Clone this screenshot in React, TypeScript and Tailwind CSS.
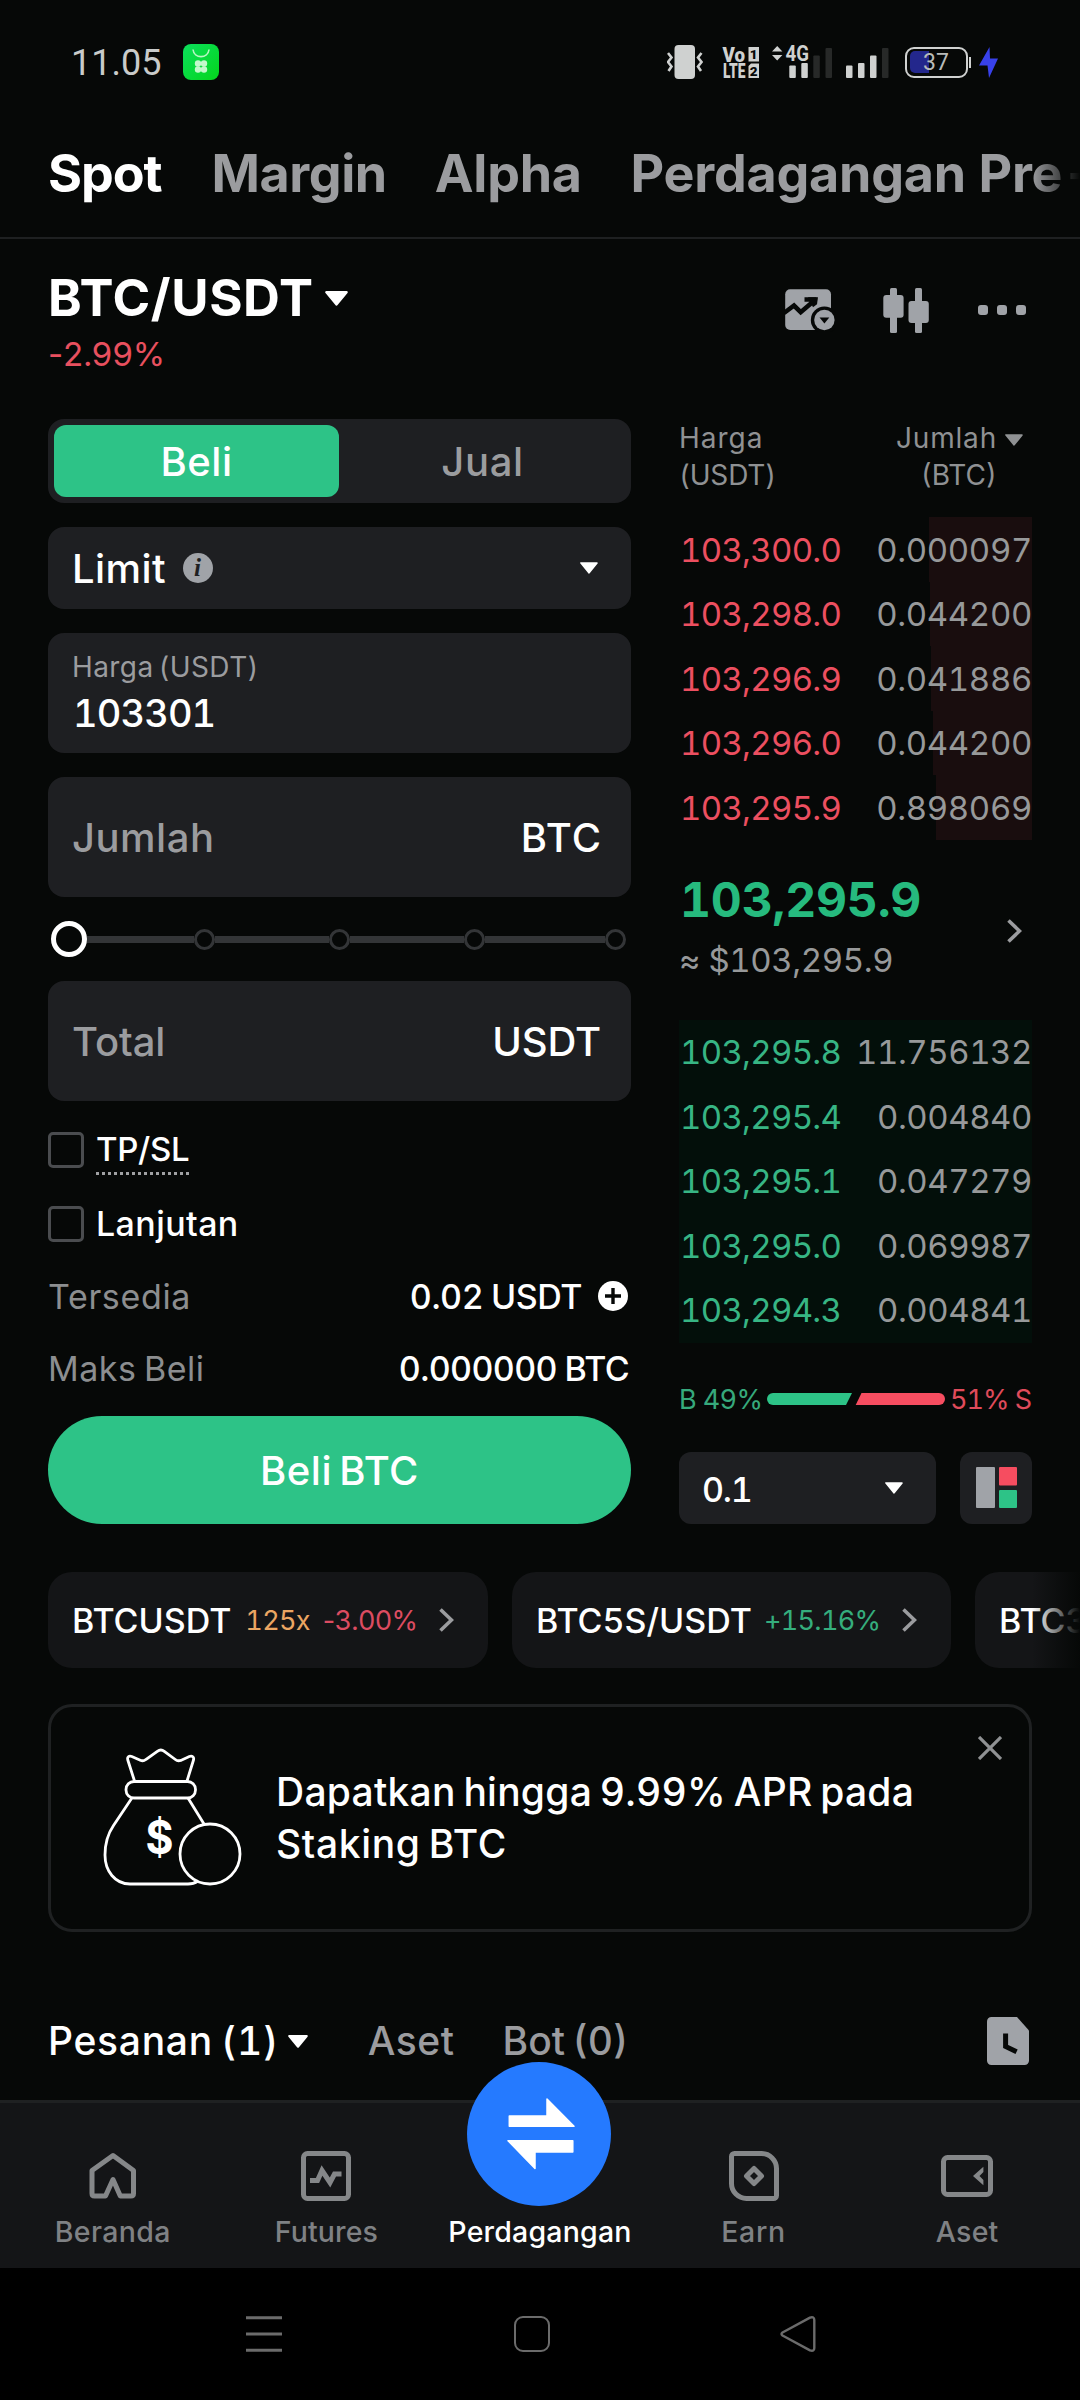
import type { ReactNode } from 'react';

const asks = [
  { price: '103,300.0', amount: '0.000097', depth: 103 },
  { price: '103,298.0', amount: '0.044200', depth: 102.5 },
  { price: '103,296.9', amount: '0.041886', depth: 101 },
  { price: '103,296.0', amount: '0.044200', depth: 99 },
  { price: '103,295.9', amount: '0.898069', depth: 96 },
];

const bids = [
  { price: '103,295.8', amount: '11.756132' },
  { price: '103,295.4', amount: '0.004840' },
  { price: '103,295.1', amount: '0.047279' },
  { price: '103,295.0', amount: '0.069987' },
  { price: '103,294.3', amount: '0.004841' },
];

function Caret({ className = '' }: { className?: string }) {
  return (
    <svg viewBox="0 0 20 13" className={`shrink-0 ${className}`} fill="currentColor" stroke="currentColor" strokeLinejoin="round" strokeWidth="2">
      <path d="M1.2 1h17.6L10 11.8z" />
    </svg>
  );
}

function Chevron({ className = '' }: { className?: string }) {
  return (
    <svg viewBox="0 0 15 24" className={`h-6 w-[15px] shrink-0 ${className}`} fill="none" stroke="#9b9c9f" strokeWidth="3.6">
      <path d="M1.5 1.5 12.5 12 1.5 22.5" />
    </svg>
  );
}

function StatusBar() {
  return (
    <div className="flex h-[124px] shrink-0 items-center pl-[71px]">
      <span className="pt-[2px] font-['Roboto'] text-[36px] leading-none text-[#c9cbca]">11.05</span>
      <svg viewBox="0 0 36 36" className="ml-[22px] size-9">
        <defs>
          <linearGradient id="bag" x1="0" y1="0" x2="1" y2="1">
            <stop offset="0" stopColor="#0be05c" />
            <stop offset="1" stopColor="#04d51c" />
          </linearGradient>
        </defs>
        <rect width="36" height="36" rx="8" fill="url(#bag)" />
        <path d="M10 5.5c1 9.500 15 9.500 16 0" fill="none" stroke="#b8f7c4" strokeWidth="1.6" />
        <g fill="#c4f8cb">
          <circle cx="15" cy="19.500" r="3.200" />
          <circle cx="21" cy="19.500" r="3.200" />
          <circle cx="15" cy="25.500" r="3.200" />
          <circle cx="21" cy="25.500" r="3.200" />
        </g>
      </svg>

      <div className="ml-auto flex items-center pr-[82px]">
        <svg viewBox="0 0 36 36" className="size-9" fill="none" stroke="#cfd1d0" strokeWidth="2.6">
          <rect x="7.500" y="1" width="20.500" height="34" rx="4" fill="#cfd1d0" stroke="none" />
          <path d="m1 9 3.500 4.500L1 18l3.500 4.500L1.500 27M34.500 9 31 13.500l3.500 4.500-3.500 4.500 3 4.500" />
        </svg>
        <svg viewBox="0 0 36 32" className="ml-[20px] h-8 w-9 overflow-visible" fontFamily="Roboto" fontWeight="900" fill="#cfd1d0">
          <text x="-.5" y="15.500" fontSize="20" textLength="22.500" lengthAdjust="spacingAndGlyphs">Vo</text>
          <text x="0" y="31.500" fontSize="19.500" textLength="22.500" lengthAdjust="spacingAndGlyphs">LTE</text>
          <path d="M25.500 1H36v14.500H25.500zM28 17.500h8V32H25.500V20z" />
          <g fill="#060807" fontSize="13.500" textAnchor="middle">
            <text x="30.700" y="13">1</text>
            <text x="30.700" y="29.500">2</text>
          </g>
        </svg>
        <svg viewBox="0 0 61 32" className="ml-[13px] h-8 w-[61px] overflow-visible" fill="#cfd1d0">
          <path d="m0 5.500 5.200-5.500 5.200 5.500zM0 9h10.400L5.200 14.500z" />
          <text x="13.500" y="15" fontFamily="Roboto" fontWeight="700" fontSize="22" textLength="23.500" lengthAdjust="spacingAndGlyphs">4G</text>
          <rect x="17.300" y="19.500" width="6.500" height="12.500" rx="1" />
          <rect x="29.300" y="17" width="6.500" height="15" rx="1" />
          <rect x="41.300" y="9.500" width="6.500" height="22.500" rx="1" fill="#272928" />
          <rect x="53.500" y="2" width="6.500" height="30" rx="1" fill="#272928" />
        </svg>
        <svg viewBox="0 0 44 32" className="ml-[13px] h-8 w-11" fill="#cfd1d0">
          <rect y="19.500" width="6.500" height="12.500" rx="1" />
          <rect x="12" y="17" width="6.500" height="15" rx="1" />
          <rect x="24" y="9.500" width="6.500" height="22.500" rx="1" />
          <rect x="36" y="2" width="6.500" height="30" rx="1" fill="#272928" />
        </svg>
        <div className="ml-[15px] flex h-[31px] w-[63px] items-center rounded-[9px] border-2 border-[#cfd1d0] p-[3px]">
          <div className="h-[22px] w-[19px] shrink-0 rounded-l-[5px] bg-[#23278c]" />
          <span className="-ml-[6px] font-['Roboto'] text-[23px] leading-none text-[#b9bbb9]">37</span>
        </div>
        <div className="ml-px h-[11px] w-[2px] bg-[#cfd1d0]" />
        <svg viewBox="0 0 19 31" className="ml-[8px] h-[31px] w-[19px]" fill="#3841ea">
          <path d="M10.500 0 0 18.500h8.500L10 31l9-19.500h-8z" />
        </svg>
      </div>
    </div>
  );
}

function MarketTabs() {
  return (
    <div className="relative flex h-[115px] shrink-0 items-center gap-12 overflow-hidden border-b-2 border-[#1e2021] pb-[14px] pl-12 text-[52px] leading-[60px] font-bold whitespace-nowrap text-[#9b9c9f]">
      <span className="tracking-[-1.1px] text-white">Spot</span>
      <span className="pl-[2px] tracking-[-0.4px]">Margin</span>
      <span className="tracking-[-0.3px]">Alpha</span>
      <span className="pl-px tracking-[-0.25px] [word-spacing:-1px]">Perdagangan Pre-</span>
      <div className="absolute top-0 right-0 h-[112px] w-12 bg-linear-to-r from-transparent to-[#060807]" />
    </div>
  );
}

function PairHeader() {
  return (
    <div className="flex h-[180px] shrink-0 justify-between pr-[54px] pl-12">
      <div className="pt-[29px]">
        <div className="flex items-center leading-[60px]">
          <span className="text-[51px] font-bold tracking-[0.6px]">BTC/USDT</span>
          <Caret className="ml-[11px] h-[15px] w-[23px]" />
        </div>
        <div className="mt-1 text-[33px] leading-[44px] tracking-[-0.7px] text-[#e8505f]">
          <span className="normal-nums">-</span>2.99%
        </div>
      </div>
      <div className="mt-[47px] flex h-12 items-center">
        <svg viewBox="0 0 52 44" className="h-11 w-[52px]" fill="#a0a3a8">
          <rect x="1.200" y="1.300" width="45.800" height="40.700" rx="5" />
          <path d="M0 25 10 17.500l6.700 6.700L31 12M20.500 11.500h12" fill="none" stroke="#060807" strokeWidth="4.600" />
          <path d="M24 9.200h10l-1 7-4 3z" fill="#060807" />
          <circle cx="40.400" cy="32" r="13.600" fill="#060807" />
          <circle cx="40.400" cy="32" r="10.200" />
          <path d="M35.500 29.500h9.800l-4.900 6z" fill="#060807" />
        </svg>
        <svg viewBox="0 0 46 45" className="ml-[47px] h-[45px] w-[46px]" fill="#a0a3a8">
          <rect x="7" width="7" height="45" rx="1.500" />
          <rect x=".3" y="7" width="20.300" height="22.700" rx="3" />
          <rect x="32" width="7" height="45" rx="1.500" />
          <rect x="25.500" y="13" width="20.300" height="22" rx="3" />
        </svg>
        <div className="ml-[49px] flex gap-[9px]">
          <div className="size-[10px] rounded-[3px] bg-[#a0a3a8]" />
          <div className="size-[10px] rounded-[3px] bg-[#a0a3a8]" />
          <div className="size-[10px] rounded-[3px] bg-[#a0a3a8]" />
        </div>
      </div>
    </div>
  );
}

function Slider() {
  const dot = 'size-[21px] rounded-full border-[3px] border-[#333537]';
  const line = 'h-[7px] bg-[#333537]';
  return (
    <div className="flex h-[84px] items-center pr-1 pl-[3px]">
      <div className="size-9 rounded-full border-[5px] border-white" />
      <div className={`${line} w-[107px]`} />
      <div className={dot} />
      <div className={`${line} w-[114px]`} />
      <div className={dot} />
      <div className={`${line} w-[114px]`} />
      <div className={dot} />
      <div className={`${line} w-[120px]`} />
      <div className={dot} />
    </div>
  );
}

function Box({ children, className }: { children: ReactNode; className: string }) {
  return <div className={`flex rounded-2xl bg-[#1e1f22] ${className}`}>{children}</div>;
}

function OrderForm() {
  return (
    <div className="flex w-[583px] flex-col">
      <Box className="h-[84px] p-[6px] text-[40px] font-medium">
        <div className="flex w-[285px] items-center justify-center rounded-xl bg-[#2dc387] pt-[2px] tracking-[0.5px]">Beli</div>
        <div className="flex flex-1 items-center justify-center pt-[2px] pl-px tracking-[0.6px] text-[#9b9c9f]">Jual</div>
      </Box>

      <Box className="mt-6 h-[82px] items-center pr-[33px] pl-6">
        <span className="pt-[2px] text-[40px] font-medium tracking-[0.4px]">Limit</span>
        <svg viewBox="0 0 30 30" className="ml-[17px] size-[30px]">
          <circle cx="15" cy="15" r="15" fill="#a0a3a8" />
          <text x="14.500" y="22.500" textAnchor="middle" fontFamily="Liberation Serif" fontStyle="italic" fontWeight="700" fontSize="25" fill="#1e1f22">i</text>
        </svg>
        <Caret className="ml-auto h-3 w-[18px]" />
      </Box>

      <Box className="mt-6 h-[120px] flex-col px-6 pt-[15px]">
        <span className="text-[28px] leading-[38px] tracking-[0.4px] text-[#9b9c9f] [word-spacing:-3px]">Harga (USDT)</span>
        <span className="mt-[5px] pl-px text-[38px] leading-[44px] font-medium tracking-[-0.9px]">103301</span>
      </Box>

      <Box className="mt-6 h-[120px] items-center justify-between pt-px pr-[29px] pl-6 text-[40px] font-medium">
        <span className="tracking-[0.5px] text-[#9b9c9f]">Jumlah</span>
        <span className="tracking-[1px]">BTC</span>
      </Box>

      <Slider />

      <Box className="h-[120px] items-center justify-between pt-px pr-[30px] pl-6 text-[40px] font-medium">
        <span className="tracking-[-0.1px] text-[#9b9c9f]">Total</span>
        <span className="tracking-[-0.1px]">USDT</span>
      </Box>

      <div className="mt-[31px] flex h-9 items-center text-[33px] leading-9 font-medium">
        <div className="size-9 rounded-[5px] border-[3px] border-[#4a4c4f]" />
        <div className="relative ml-3">
          <span className="relative -top-px tracking-[-0.3px]">TP/SL</span>
          <div className="absolute inset-x-0 -bottom-[7px] h-[3px] bg-[repeating-linear-gradient(90deg,#a0a1a3_0_3px,transparent_3px_6px)]" />
        </div>
      </div>
      <div className="mt-[38px] flex h-9 items-center text-[34px] leading-9 font-medium">
        <div className="size-9 rounded-[5px] border-[3px] border-[#4a4c4f]" />
        <span className="ml-3 tracking-[0.4px]">Lanjutan</span>
      </div>

      <div className="mt-[34px] flex h-10 items-center text-[34px]">
        <span className="tracking-[0.65px] text-[#8c8e90]">Tersedia</span>
        <span className="ml-auto font-medium tracking-[-0.45px] [word-spacing:-1px]">0.02 USDT</span>
        <svg viewBox="0 0 30 30" className="mr-[3px] ml-[16px] size-[30px]">
          <circle cx="15" cy="15" r="15" fill="#fff" />
          <path d="M15 7v16M7 15h16" stroke="#060807" strokeWidth="3.400" />
        </svg>
      </div>
      <div className="mt-8 flex h-10 items-center justify-between pr-[2px] text-[34px]">
        <span className="tracking-[0.5px] text-[#8c8e90] [word-spacing:-2px]">Maks Beli</span>
        <span className="font-medium tracking-[-0.65px] [word-spacing:-1px]">0.000000 BTC</span>
      </div>

      <div className="mt-[28px] flex h-[108px] items-center justify-center rounded-full bg-[#2dc387] pt-[2px] text-[40px] font-medium tracking-[0.5px] [word-spacing:-4px]">Beli BTC</div>
    </div>
  );
}

function OrderBook() {
  return (
    <div className="flex w-[353px] flex-col">
      <div className="flex h-[74px] justify-between pt-px text-[28px] leading-[37px] text-[#8f9193]">
        <div>
          <div className="tracking-[1px]">Harga</div>
          <div className="tracking-[-0.2px]">(USDT)</div>
        </div>
        <div className="flex pr-[9px] text-right">
          <div>
            <div className="tracking-[0.8px]">Jumlah</div>
            <div>(BTC)</div>
          </div>
          <Caret className="mt-[14px] ml-[8px] h-3 w-[18px]" />
        </div>
      </div>

      <div className="mt-6 flex flex-col text-[33px]">
        {asks.map((row) => (
          <div key={row.price} className="relative flex h-[64.600px] items-center justify-between pt-[2px] pl-px">
            <div className="absolute inset-y-0 right-0 bg-[#190d0e]" style={{ width: row.depth }} />
            <span className="relative tracking-[-0.7px] text-[#ec4f60]">{row.price}</span>
            <span className="relative tracking-[-0.35px] text-[#97999a]">{row.amount}</span>
          </div>
        ))}
      </div>

      <div className="mt-[30px] flex items-center justify-between pr-[10px]">
        <div>
          <div className="pl-px text-[48px] leading-[60px] font-bold tracking-[-0.2px] text-[#26ba7e]">103,295.9</div>
          <div className="mt-[10px] text-[33px] leading-10 tracking-[-0.4px] text-[#97999a]">≈ $103,295.9</div>
        </div>
        <Chevron className="mt-[12px]" />
      </div>

      <div className="mt-[40px] flex flex-col bg-[#030f0a] text-[33px]">
        {bids.map((row) => (
          <div key={row.price} className="flex h-[64.600px] items-center justify-between pt-px pl-px">
            <span className="tracking-[-0.7px] text-[#37b584]">{row.price}</span>
            <span className="tracking-[-0.45px] text-[#97999a]">{row.amount}</span>
          </div>
        ))}
      </div>

      <div className="mt-9 flex h-10 items-center text-[27px]">
        <span className="pt-[2px] tracking-[-0.6px] text-[#36a97c]">B 49%</span>
        <svg viewBox="0 0 178 12" className="ml-auto h-3 w-[178px]">
          <path d="M6 0h79l-6 12H6A6 6 0 0 1 6 0z" fill="#2dc387" />
          <path d="M94.500 0H172a6 6 0 0 1 0 12H88.700z" fill="#f64d60" />
        </svg>
        <span className="ml-auto pt-[2px] pr-px tracking-[-1px] text-[#e04b5b]">51% S</span>
      </div>

      <div className="mt-[33px] flex h-[72px] gap-6">
        <div className="flex w-[257px] items-center justify-between rounded-xl bg-[#1e1f22] pr-[33px] pl-[23px] text-[34px] font-medium">
          <span className="pt-[3px] tracking-[-1.2px]">0.1</span>
          <Caret className="h-3 w-[18px]" />
        </div>
        <div className="flex flex-1 items-center justify-center rounded-xl bg-[#1e1f22]">
          <svg viewBox="0 0 41 41" className="size-[41px]">
            <rect width="19" height="41" rx="1" fill="#a0a3a8" />
            <rect x="23" width="18" height="18.500" rx="1" fill="#f64d60" />
            <rect x="23" y="23" width="18" height="18" rx="1" fill="#2dc387" />
          </svg>
        </div>
      </div>
    </div>
  );
}

function RelatedPairs() {
  return (
    <div className="relative mt-12 flex h-24 shrink-0 gap-6 overflow-hidden pl-12 whitespace-nowrap">
      <div className="flex w-[440px] shrink-0 items-center rounded-3xl bg-[#141517] pl-6">
        <span className="pt-px text-[34px] font-medium">BTCUSDT</span>
        <span className="ml-[14px] pt-[2px] text-[27px] tracking-[-0.7px] text-[#eba663]">125x</span>
        <span className="ml-[13px] pt-[2px] text-[27px] tracking-[-0.7px] text-[#dc4c61]"><span className="normal-nums">-</span>3.00%</span>
        <Chevron className="mr-[34px] ml-auto" />
      </div>
      <div className="flex w-[439px] shrink-0 items-center rounded-3xl bg-[#141517] pl-6">
        <span className="pt-px text-[34px] font-medium">BTC5S/USDT</span>
        <span className="ml-[12px] pt-[2px] text-[27px] tracking-[-0.7px] text-[#35ad7d]">+15.16%</span>
        <Chevron className="mr-[34px] ml-auto" />
      </div>
      <div className="flex w-[440px] shrink-0 items-center rounded-3xl bg-[#141517] pl-6">
        <span className="pt-px text-[34px] font-medium">BTC3</span>
      </div>
      <div className="absolute top-0 right-0 h-24 w-12 bg-linear-to-r from-transparent to-[#060807]" />
    </div>
  );
}

function StakingCard() {
  return (
    <div className="mx-12 mt-9 flex h-[228px] shrink-0 items-center rounded-3xl border-[3px] border-[#1f2122] pl-[49px]">
      <svg viewBox="0 0 144 140" className="h-[140px] w-36" fill="none" stroke="#fff" strokeWidth="2.800">
        <path d="M34.500 33 27.800 12c-.8-3 1-4.500 4-3.500l8.500 3.700c2 .9 3.800.7 5.500-.7l11.500-8.200c2.500-1.800 4.600-1.800 7 0l11 8.200c1.700 1.400 3.500 1.600 5.500.9l8.500-3.900c3-1 5 .5 4.200 3.500L87 33" />
        <rect x="26" y="33.500" width="69.500" height="16.500" rx="8" />
        <path d="M31.900 50 13.500 77.500C7 87 5 98 5 107c0 16 10 29 25 29h58c4 0 7-1 10-3M88 50l16 26" />
        <circle cx="110" cy="106" r="30" />
        <text x="59.500" y="106" textAnchor="middle" fontFamily="Inter" fontWeight="700" fontSize="46" fill="#fff" stroke="none" textLength="28" lengthAdjust="spacingAndGlyphs">$</text>
      </svg>
      <p className="ml-[32px] w-[660px] text-[39px] leading-[52px] font-medium tracking-[0.25px] [word-spacing:-3px]">
        Dapatkan hingga 9.99% APR pada <span className="tracking-[0.65px]">Staking BTC</span>
      </p>
      <svg viewBox="0 0 24 24" className="mt-[29px] mr-[27px] ml-auto size-6 self-start" stroke="#8f9193" strokeWidth="3.200">
        <path d="m1 1 22 22M23 1 1 23" />
      </svg>
    </div>
  );
}

function OrdersBar() {
  return (
    <div className="mt-[69px] flex h-[99px] shrink-0 items-center pr-[51px] pb-[19px] pl-12 text-[39px] font-medium text-[#9b9c9f]">
      <span className="tracking-[0.7px] text-white [word-spacing:-3px]">Pesanan (1)</span>
      <Caret className="ml-[9px] h-[13px] w-5 text-white" />
      <span className="ml-[60px] tracking-[0.5px]">Aset</span>
      <span className="ml-[48px] [word-spacing:-3px]">Bot (0)</span>
      <svg viewBox="0 0 42 48" className="ml-auto h-12 w-[42px]">
        <path d="M4.500 0H30l12 13.500v30c0 2.700-1.800 4.500-4.500 4.500h-33C1.800 48 0 46.200 0 43.500v-39C0 1.800 1.800 0 4.500 0z" fill="#a0a3a8" />
        <path d="M18.600 16.500V29.500l11 5.300" fill="none" stroke="#060807" strokeWidth="5" />
      </svg>
    </div>
  );
}

function NavItem({ label, className, children }: { label: string; className: string; children: ReactNode }) {
  return (
    <div className="flex flex-1 flex-col items-center pt-[47px] text-[28.500px] leading-[34px] font-medium text-[#7f8184]">
      <svg viewBox="0 0 52 52" className="size-[52px]" fill="none" stroke="#858789" strokeWidth="5" strokeLinejoin="round">
        {children}
      </svg>
      <span className={`mt-[13px] ${className}`}>{label}</span>
    </div>
  );
}

function BottomNav() {
  return (
    <div className="relative flex h-[168px] shrink-0 border-t-[3px] border-[#1f2122] bg-[#141517] px-[6px]">
      <NavItem label="Beranda" className="tracking-[0.4px]">
        <path d="M26 5.500 5 20.500V43.500q0 2.500 2.500 2.500H18.500L26 29.500 33.300 46H44q2.500 0 2.500-2.500V20.500z" />
      </NavItem>
      <NavItem label="Futures" className="tracking-[0.1px]">
        <rect x="3.500" y="3.500" width="45" height="45" rx="4" />
        <path d="M10 30.500h7.500L22 20.500l8 12 4.500-8.500h7" strokeLinejoin="miter" />
      </NavItem>
      <div className="flex flex-1 flex-col items-center pt-[112px] text-[28.500px] leading-[34px] font-medium">
        <span className="tracking-[0.2px]">Perdagangan</span>
      </div>
      <NavItem label="Earn" className="tracking-[0.7px]">
        <path d="M6.500 3.500H33.500a15 15 0 0 1 15 15V45.500a3 3 0 0 1-3 3H18.500a15 15 0 0 1-15-15V6.500a3 3 0 0 1 3-3z" />
        <path d="M26 18.500 33.500 26 26 33.500 18.500 26z" />
      </NavItem>
      <NavItem label="Aset" className="tracking-[0.2px]">
        <rect x="2.500" y="7.500" width="47" height="37" rx="4" />
        <path d="m42.400 16.700v5.300L38.500 26l3.900 4v5.300L32 26z" fill="#858789" stroke="none" />
      </NavItem>
      <svg viewBox="0 0 144 144" className="absolute -top-[41px] left-[467px] size-36" fill="#fff" stroke="#fff" strokeWidth="1.500" strokeLinejoin="round">
        <circle cx="72" cy="72" r="72" fill="#257aff" stroke="none" />
        <path d="M42.300 54H80V37l27 27.300H42.300zM41 78.700h64.800v11.200H68v16.600z" />
      </svg>
    </div>
  );
}

function SystemNav() {
  return (
    <div className="flex flex-1 items-center bg-black pl-[246px]">
      <svg viewBox="0 0 36 36" className="size-9" stroke="#6b6b6b" strokeWidth="3">
        <path d="M0 1.700h36M0 18h36M0 34.300h36" />
      </svg>
      <div className="ml-[232px] size-9 rounded-[9px] border-2 border-[#6b6b6b]" />
      <svg viewBox="0 0 36 36" className="ml-[230px] size-9" fill="none" stroke="#6b6b6b" strokeWidth="2.400" strokeLinejoin="round">
        <path d="M2.500 16.500 30 1.600q4.300-1.400 4.300 2.500v27.800q0 3.900-4.300 2.500L2.500 19.500q-2-1.500 0-3z" />
      </svg>
    </div>
  );
}

export default function App() {
  return (
    <div className="flex h-[2400px] w-[1080px] flex-col overflow-hidden bg-[#060807] font-['Inter',sans-serif] text-white tabular-nums">
      <StatusBar />
      <MarketTabs />
      <PairHeader />
      <div className="flex h-[1105px] shrink-0 justify-between px-12">
        <OrderForm />
        <OrderBook />
      </div>
      <RelatedPairs />
      <StakingCard />
      <OrdersBar />
      <BottomNav />
      <SystemNav />
    </div>
  );
}
